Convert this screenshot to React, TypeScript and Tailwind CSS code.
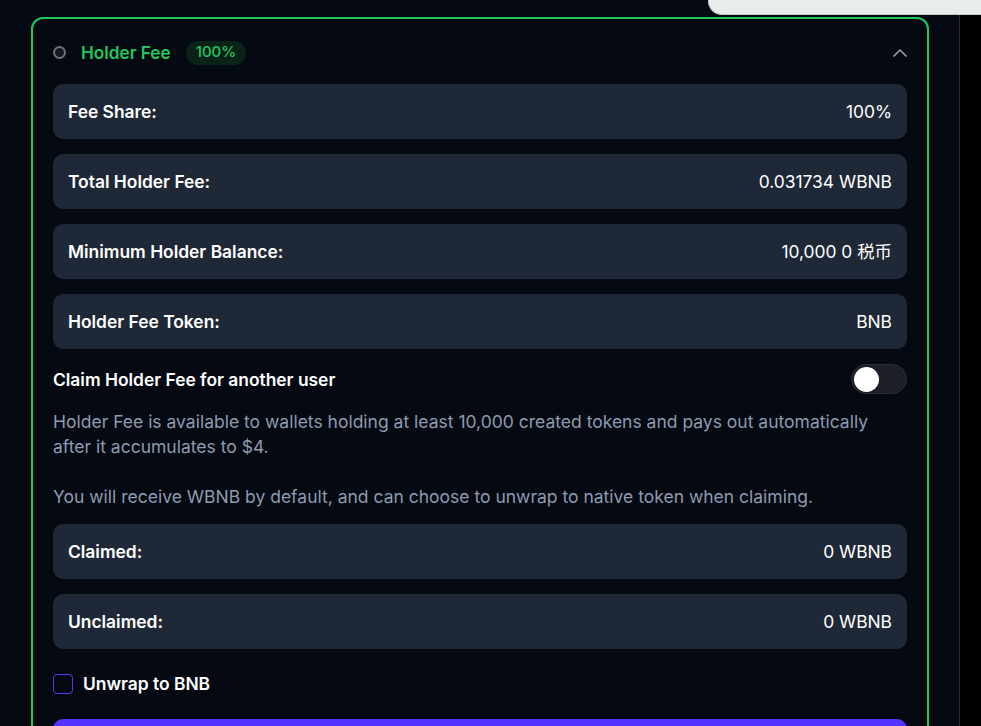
import React from "react";

const Row = ({ label, value }: { label: string; value: string }) => (
  <div className="flex h-[55px] items-center justify-between rounded-[10px] bg-[#1f2836] px-[15px] pt-[2px]">
    <span className="font-semibold text-white">{label}</span>
    <span className="font-normal text-white">{value}</span>
  </div>
);

export default function App() {
  return (
    <div
      className="relative flex h-[726px] w-[981px] overflow-hidden bg-black text-[17.4px]"
      style={{ fontFamily: "Inter, 'Noto Sans CJK SC', sans-serif" }}
    >
      <div className="h-full w-[960px] border-r border-[#2a2e37] bg-[#050912] pl-[31px] pr-[30px] pt-[17px]">
        <div className="rounded-[12px] border-2 border-[#22c55e] p-5">
          <div className="flex h-[25px] items-center justify-between pt-[2px]">
            <div className="flex items-center gap-[15px]">
              <span className="h-[13px] w-[13px] rounded-full border-2 border-[#6b7280] bg-[#141a1c]" />
              <span className="text-[17.2px] font-semibold text-[#22c55e]">Holder Fee</span>
              <span className="flex h-[24px] items-center rounded-full bg-[#0a2316] px-[10px] text-[15px] font-medium text-[#22c55e]">
                100%
              </span>
            </div>
            <svg width="14" height="9" viewBox="0 0 14 9">
              <path d="M1 8 L7 2 L13 8" fill="none" stroke="#9ca3af" strokeWidth="1.6" strokeLinecap="round" strokeLinejoin="round" />
            </svg>
          </div>

          <div className="mt-5 flex flex-col gap-[15px]">
            <Row label="Fee Share:" value="100%" />
            <Row label="Total Holder Fee:" value="0.031734 WBNB" />
            <Row label="Minimum Holder Balance:" value="10,000 0 税币" />
            <Row label="Holder Fee Token:" value="BNB" />

            <div className="flex items-center justify-between">
              <span className="pt-[2px] font-semibold text-white">Claim Holder Fee for another user</span>
              <div className="flex h-[30px] w-[56px] items-center rounded-full border border-[#2a303b] bg-[#1a1f28] px-[2px]">
                <span className="h-[25px] w-[25px] rounded-full bg-white" />
              </div>
            </div>

            <div className="text-[17.5px] leading-[25px] text-[#8e9bb0]">
              <p>
                Holder Fee is available to wallets holding at least 10,000 created tokens and pays out automatically
                after it accumulates to $4.
              </p>
              <p className="mt-[25px]">
                You will receive WBNB by default, and can choose to unwrap to native token when claiming.
              </p>
            </div>

            <Row label="Claimed:" value="0 WBNB" />
            <Row label="Unclaimed:" value="0 WBNB" />

            <div className="flex items-center gap-[10px] py-2">
              <span className="h-[20px] w-[20px] rounded-[4px] border-[1.5px] border-[#4f3bf0] bg-transparent" />
              <span className="font-semibold leading-[24px] text-white">Unwrap to BNB</span>
            </div>

            <div className="h-[48px] rounded-[10px] bg-[#5533ff]" />
          </div>
        </div>
      </div>
      <div className="absolute right-0 top-[-20px] h-[35px] w-[273px] rounded-bl-[14px] border-b border-l border-[#c6cac9] bg-[#e8ecea]" />
    </div>
  );
}
